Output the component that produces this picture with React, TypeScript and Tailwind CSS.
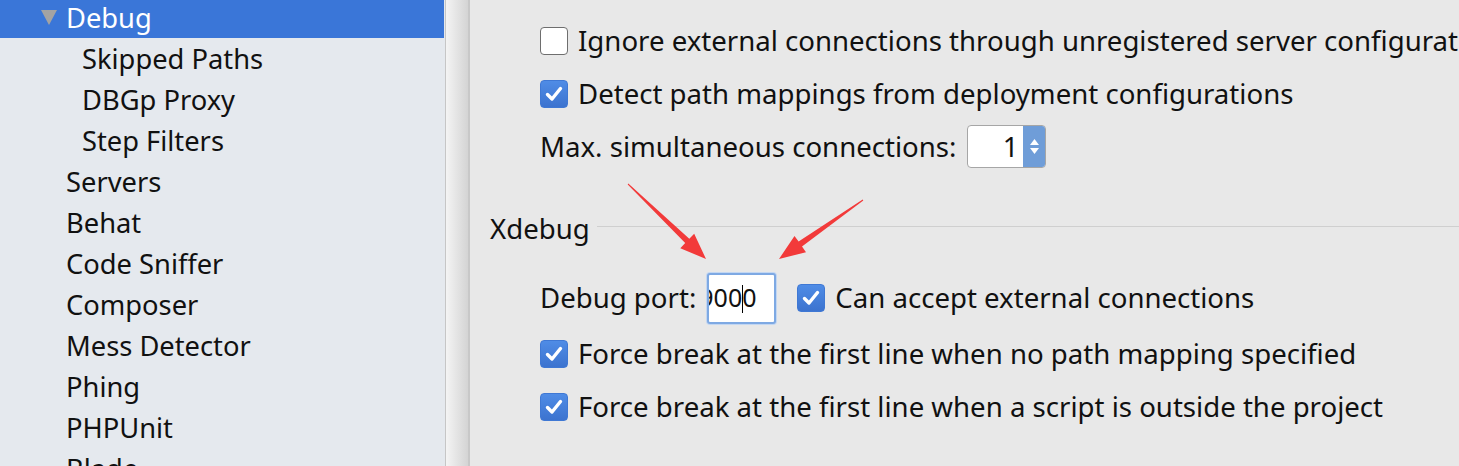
import React from 'react';

type ArrowProps = { x1: number; y1: number; x2: number; y2: number };

// tapered red annotation arrow, tail (x1,y1) -> head (x2,y2)
const Arrow = ({ x1, y1, x2, y2 }: ArrowProps) => {
  const dx = x2 - x1;
  const dy = y2 - y1;
  const len = Math.sqrt(dx * dx + dy * dy);
  const ux = dx / len;
  const uy = dy / len;
  const px = -uy;
  const py = ux;
  const headLen = 26;
  const headW = 10;
  const bx = x2 - ux * headLen;
  const by = y2 - uy * headLen;
  const pts = [
    [x1 + px * 0.5, y1 + py * 0.5],
    [bx + px * 3, by + py * 3],
    [bx + px * headW, by + py * headW],
    [x2, y2],
    [bx - px * headW, by - py * headW],
    [bx - px * 3, by - py * 3],
    [x1 - px * 0.5, y1 - py * 0.5],
  ]
    .map((p) => p[0].toFixed(1) + ',' + p[1].toFixed(1))
    .join(' ');
  return <polygon points={pts} fill="#f23a3a" />;
};

const Check = ({ checked }: { checked: boolean }) =>
  checked ? (
    <div className="w-[28px] h-[28px] shrink-0 rounded-[4px] bg-gradient-to-b from-[#4f8ce6] to-[#3c73cf] border border-[#3f78d4] flex items-center justify-center">
      <svg width="18" height="16" viewBox="0 0 18 16">
        <path
          d="M2.5 8.5 L7 13 L15.5 2.5"
          fill="none"
          stroke="#fff"
          strokeWidth="3.4"
          strokeLinecap="round"
          strokeLinejoin="round"
        />
      </svg>
    </div>
  ) : (
    <div className="w-[28px] h-[28px] shrink-0 rounded-[4px] bg-white border border-[#6e6e6e]"></div>
  );

const tree = [
  { label: 'Skipped Paths', indent: 'pl-[82px]' },
  { label: 'DBGp Proxy', indent: 'pl-[82px]' },
  { label: 'Step Filters', indent: 'pl-[82px]' },
  { label: 'Servers', indent: 'pl-[66px]' },
  { label: 'Behat', indent: 'pl-[66px]' },
  { label: 'Code Sniffer', indent: 'pl-[66px]' },
  { label: 'Composer', indent: 'pl-[66px]' },
  { label: 'Mess Detector', indent: 'pl-[66px]' },
  { label: 'Phing', indent: 'pl-[66px]' },
  { label: 'PHPUnit', indent: 'pl-[66px]' },
  { label: 'Blade', indent: 'pl-[66px]' },
];

const App: React.FC = () => {
  return (
    <div
      className="relative w-[1459px] h-[466px] overflow-hidden flex bg-[#e8e8e8] text-[27.6px] text-[#111]"
      style={{ fontFamily: '"Noto Sans", "Open Sans", sans-serif' }}
    >
      {/* sidebar */}
      <div className="w-[446px] shrink-0 bg-[#e5e9ee] border-r border-[#c6c6c6] text-[27.3px]">
        <div className="-mt-[3px] flex flex-col">
          <div className="h-[41px] bg-[#3a76d8] text-white flex items-center w-[444px]">
            <svg className="ml-[41px] mr-[9px]" width="16" height="15" viewBox="0 0 16 15">
              <polygon points="0,0 16,0 8,15" fill="#a3a3a3" />
            </svg>
            <span className="leading-none">Debug</span>
          </div>
          {tree.map((t) => (
            <div key={t.label} className={'h-[41px] flex items-center leading-none ' + t.indent}>
              {t.label}
            </div>
          ))}
        </div>
      </div>

      {/* splitter */}
      <div className="w-[24px] shrink-0 bg-gradient-to-r from-[#f4f4f4] to-[#d4d4d4] border-r-2 border-[#c8c8c8]"></div>

      {/* content */}
      <div className="flex-1 flex flex-col pt-[14px] whitespace-nowrap">
        <div className="h-[53px] flex items-center pl-[70px] gap-[10px]">
          <Check checked={false} />
          <span>Ignore external connections through unregistered server configurations</span>
        </div>
        <div className="h-[53px] flex items-center pl-[70px] gap-[10px]">
          <Check checked={true} />
          <span>Detect path mappings from deployment configurations</span>
        </div>
        <div className="h-[53px] flex items-center pl-[70px] gap-[11px]">
          <span>Max. simultaneous connections:</span>
          <div className="w-[79px] h-[43px] flex rounded-[4px] border border-[#a6a6a6] overflow-hidden bg-white">
            <div className="flex-1 flex items-center justify-end pr-[5px]">1</div>
            <div className="w-[22px] bg-[#6f9dd8] flex flex-col items-center justify-center gap-[3px]">
              <svg width="9" height="6" viewBox="0 0 9 6">
                <polygon points="4.5,0 9,6 0,6" fill="#fff" />
              </svg>
              <svg width="9" height="6" viewBox="0 0 9 6">
                <polygon points="0,0 9,0 4.5,6" fill="#fff" />
              </svg>
            </div>
          </div>
        </div>

        <div className="mt-[36px] h-[40px] flex items-center pl-[20px]">
          <span>Xdebug</span>
          <div className="flex-1 h-px bg-[#cfcfcf] ml-[7px] -mt-[6px]"></div>
        </div>

        <div className="mt-[21px] h-[56px] flex items-center pl-[70px]">
          <span>Debug port:</span>
          <div className="ml-[11px] w-[69px] h-[51px] rounded-[3px] border-2 border-[#7ea9e3] bg-white relative shadow-[0_0_0_1px_#c3d7f2]">
            <div className="absolute left-0 top-0 bottom-0 right-[15px] overflow-hidden">
              <div className="absolute left-[-10px] top-0 h-full flex items-center text-[25px]">
                <span>9000</span>
              </div>
            </div>
            <div className="absolute left-[33px] top-[10px] w-px h-[28px] bg-black"></div>
          </div>
          <div className="ml-[21px] flex items-center gap-[10px]">
            <Check checked={true} />
            <span>Can accept external connections</span>
          </div>
        </div>

        <div className="mt-[1px] h-[53px] flex items-center pl-[70px] gap-[10px]">
          <Check checked={true} />
          <span>Force break at the first line when no path mapping specified</span>
        </div>
        <div className="h-[53px] flex items-center pl-[70px] gap-[10px]">
          <Check checked={true} />
          <span>Force break at the first line when a script is outside the project</span>
        </div>
      </div>

      {/* annotation arrows */}
      <svg className="absolute left-0 top-0 pointer-events-none" width="1459" height="466">
        <Arrow x1={628} y1={184} x2={706} y2={259} />
        <Arrow x1={863} y1={200} x2={779} y2={259} />
      </svg>
    </div>
  );
};

export default App;
